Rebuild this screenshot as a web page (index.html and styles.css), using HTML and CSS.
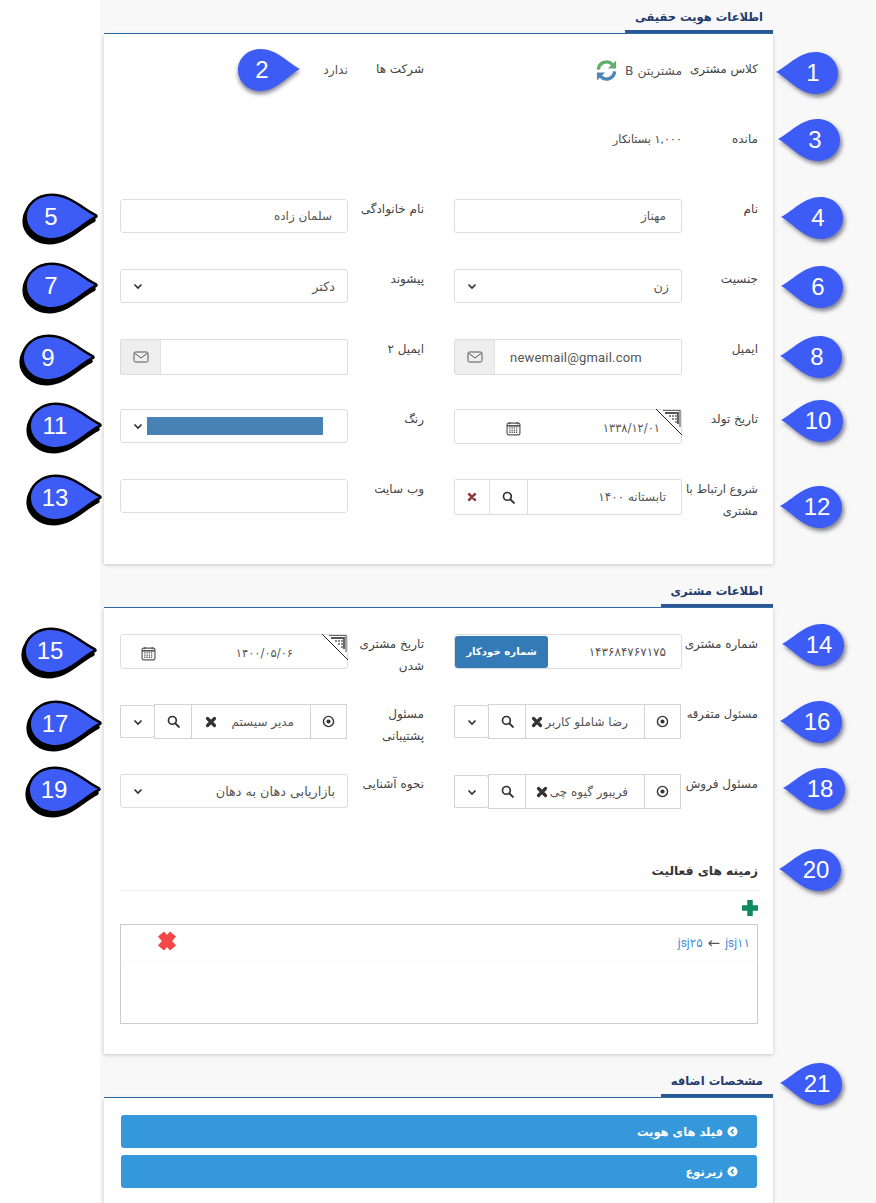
FILE: index.html
```html
<!DOCTYPE html>
<html lang="fa" dir="rtl">
<head>
  <meta charset="UTF-8" />
  <meta name="viewport" content="width=device-width, initial-scale=1.0" />
  <title>اطلاعات هویت حقیقی</title>
  <link rel="stylesheet" href="styles.css">
</head>
<body>

  <svg class="sprite" xmlns="http://www.w3.org/2000/svg">
    <symbol id="i-chevron" viewBox="0 0 12 12"><path d="M2.5 4.5 6 8l3.500-3.500" fill="none" stroke="currentColor" stroke-width="1.700"/></symbol>
    <symbol id="i-search" viewBox="0 0 14 14"><circle cx="5.800" cy="5.800" r="4.200" fill="none" stroke="currentColor" stroke-width="1.800"/><path d="M9 9l3.800 3.800" stroke="currentColor" stroke-width="2.200" stroke-linecap="round"/></symbol>
    <symbol id="i-times" viewBox="0 0 12 12"><path d="M2.500 2.500l7 7M9.500 2.500l-7 7" stroke="currentColor" stroke-width="3.200" stroke-linecap="round"/></symbol>
    <symbol id="i-times-big" viewBox="0 0 24 24"><path d="M6 5l12 14M18 5 6 19" stroke="currentColor" stroke-width="8"/></symbol>
    <symbol id="i-target" viewBox="0 0 12 12"><circle cx="6" cy="6" r="4.700" fill="none" stroke="currentColor" stroke-width="1.300"/><circle cx="6" cy="6" r="1.900" fill="currentColor"/></symbol>
    <symbol id="i-mail" viewBox="0 0 16 14"><rect x="1" y="2" width="14" height="10" rx="1.500" fill="none" stroke="currentColor" stroke-width="1"/><path d="M1.500 3 8 8l6.500-5" fill="none" stroke="currentColor" stroke-width="1"/></symbol>
    <symbol id="i-cal" viewBox="0 0 14 14"><rect x="1" y="2" width="12" height="11" rx="1.500" fill="none" stroke="currentColor" stroke-width="1.100"/><path d="M1 4.500h12" stroke="currentColor" stroke-width="1.500"/><path d="M3.500 1v2M10.500 1v2" stroke="currentColor" stroke-width="1.200"/><path d="M3 6.500h8M3 8.500h8M3 10.500h8" stroke="currentColor" stroke-width="1.200" stroke-dasharray="1.200 .9"/></symbol>
    <symbol id="i-corner" viewBox="0 0 26 26"><path d="M0 0 26 26" stroke="#222" stroke-width="1"/><path d="M7 1.500H24V18" fill="none" stroke="#666" stroke-width="1.200"/><path d="M9 4H22V15" fill="none" stroke="#555" stroke-width="1.800"/><path d="M13 7h8M16 10h5M19 13h2" fill="none" stroke="#666" stroke-width="1.500" stroke-dasharray="2 1"/></symbol>
    <symbol id="i-pin" viewBox="0 0 64 44" preserveAspectRatio="none"><path d="M0 21C13 14 24 0 41 0 54 0 64 10 64 22 64 34 54 44 41 44 24 44 13 28 0 21Z"/></symbol>
  </svg>

  <main class="page">

    <header class="section-head"><h2 class="section-title">اطلاعات هویت حقیقی</h2></header>
    <section class="panel">
      <div class="form-grid">
        <div class="field">
          <span class="label">کلاس مشتری</span>
          <span class="value">مشتریتن B
            <svg class="refresh" viewBox="0 0 24 24">
              <path d="M3.500 11A8.500 8.500 0 0 1 18.200 5.800" fill="none" stroke="#5fae6c" stroke-width="3.600"/>
              <path d="M22 1.500v8.500h-8.500z" fill="#5fae6c"/>
              <path d="M20.500 13A8.500 8.500 0 0 1 5.800 18.200" fill="none" stroke="#4f86b5" stroke-width="3.600"/>
              <path d="M2 22.500V14h8.500z" fill="#4f86b5"/>
            </svg>
          </span>
        </div>
        <div class="field">
          <span class="label">شرکت ها</span>
          <span class="value">ندارد</span>
        </div>

        <div class="field">
          <span class="label">مانده</span>
          <span class="value value-strong">۱,۰۰۰ بستانکار</span>
        </div>
        <div class="field"></div>

        <div class="field">
          <span class="label">نام</span>
          <div class="input"><span class="text">مهناز</span></div>
        </div>
        <div class="field">
          <span class="label">نام خانوادگی</span>
          <div class="input"><span class="text">سلمان زاده</span></div>
        </div>

        <div class="field">
          <span class="label">جنسیت</span>
          <div class="input input-select"><span class="text">زن</span><svg class="chev"><use href="#i-chevron"/></svg></div>
        </div>
        <div class="field">
          <span class="label">پیشوند</span>
          <div class="input input-select"><span class="text">دکتر</span><svg class="chev"><use href="#i-chevron"/></svg></div>
        </div>

        <div class="field">
          <span class="label">ایمیل</span>
          <div class="input input-tall">
            <span class="text text-ltr">newemail@gmail.com</span>
            <span class="addon"><svg class="mail"><use href="#i-mail"/></svg></span>
          </div>
        </div>
        <div class="field">
          <span class="label">ایمیل ۲</span>
          <div class="input input-tall">
            <span class="text"></span>
            <span class="addon"><svg class="mail"><use href="#i-mail"/></svg></span>
          </div>
        </div>

        <div class="field">
          <span class="label">تاریخ تولد</span>
          <div class="input input-date date-birth">
            <span class="text">۱۳۳۸/۱۲/۰۱</span>
            <svg class="cal"><use href="#i-cal"/></svg>
            <svg class="corner"><use href="#i-corner"/></svg>
          </div>
        </div>
        <div class="field">
          <span class="label">رنگ</span>
          <div class="input input-select color-select"><span class="color-bar"></span><svg class="chev"><use href="#i-chevron"/></svg></div>
        </div>

        <div class="field">
          <span class="label label-tight">شروع ارتباط با<br>مشتری</span>
          <div class="input input-tall">
            <span class="text">تابستانه ۱۴۰۰</span>
            <span class="cell cell-search"><svg class="search"><use href="#i-search"/></svg></span>
            <span class="cell cell-clear"><svg class="clear"><use href="#i-times"/></svg></span>
          </div>
        </div>
        <div class="field">
          <span class="label">وب سایت</span>
          <div class="input"><span class="text"></span></div>
        </div>
      </div>
    </section>

    <header class="section-head"><h2 class="section-title">اطلاعات مشتری</h2></header>
    <section class="panel panel-customer">
      <div class="form-grid">
        <div class="field">
          <span class="label">شماره مشتری</span>
          <div class="input input-date">
            <span class="text">۱۴۳۶۸۴۷۶۷۱۷۵</span>
            <button class="auto-btn">شماره خودکار</button>
          </div>
        </div>
        <div class="field">
          <span class="label">تاریخ مشتری<br>شدن</span>
          <div class="input input-date date-customer">
            <span class="text">۱۴۰۰/۰۵/۰۶</span>
            <svg class="cal"><use href="#i-cal"/></svg>
            <svg class="corner"><use href="#i-corner"/></svg>
          </div>
        </div>

        <div class="field">
          <span class="label label-tight">مسئول متفرقه</span>
          <div class="combo">
            <span class="cell cell-target"><svg class="target"><use href="#i-target"/></svg></span>
            <span class="cell cell-name"><span class="text">رضا شاملو کاربر</span><svg class="remove"><use href="#i-times"/></svg></span>
            <span class="cell cell-search"><svg class="search"><use href="#i-search"/></svg></span>
            <span class="cell cell-drop"><svg class="chev"><use href="#i-chevron"/></svg></span>
          </div>
        </div>
        <div class="field">
          <span class="label">مسئول<br>پشتیبانی</span>
          <div class="combo">
            <span class="cell cell-target"><svg class="target"><use href="#i-target"/></svg></span>
            <span class="cell cell-name"><span class="text">مدیر سیستم</span><svg class="remove remove-far"><use href="#i-times"/></svg></span>
            <span class="cell cell-search"><svg class="search"><use href="#i-search"/></svg></span>
            <span class="cell cell-drop"><svg class="chev"><use href="#i-chevron"/></svg></span>
          </div>
        </div>

        <div class="field">
          <span class="label">مسئول فروش</span>
          <div class="combo">
            <span class="cell cell-target"><svg class="target"><use href="#i-target"/></svg></span>
            <span class="cell cell-name"><span class="text">فریبور گیوه چی</span><svg class="remove"><use href="#i-times"/></svg></span>
            <span class="cell cell-search"><svg class="search"><use href="#i-search"/></svg></span>
            <span class="cell cell-drop"><svg class="chev"><use href="#i-chevron"/></svg></span>
          </div>
        </div>
        <div class="field">
          <span class="label">نحوه آشنایی</span>
          <div class="input input-select"><span class="text">بازاریابی دهان به دهان</span><svg class="chev"><use href="#i-chevron"/></svg></div>
        </div>
      </div>

      <h3 class="activity-title">زمینه های فعالیت</h3>
      <div class="add-row">
        <svg class="add" viewBox="0 0 16 16"><path d="M8 0v16M0 8h16" stroke="#0f8a5f" stroke-width="5.500"/></svg>
      </div>
      <div class="activity-box">
        <div class="activity-row">
          <a class="link">jsj۱۱</a>
          <span class="arrow">←</span>
          <a class="link">jsj۲۵</a>
          <svg class="activity-del"><use href="#i-times-big"/></svg>
        </div>
      </div>
    </section>

    <header class="section-head"><h2 class="section-title">مشخصات اضافه</h2></header>
    <section class="panel panel-extra">
      <div class="collapse-bar"><svg class="collapse-icon" viewBox="0 0 12 12"><circle cx="6" cy="6" r="5.500" fill="#fff"/><path d="M7.300 3.300 4.700 6l2.600 2.700" fill="none" stroke="#3498db" stroke-width="1.800"/></svg>فیلد های هویت</div>
      <div class="collapse-bar"><svg class="collapse-icon" viewBox="0 0 12 12"><circle cx="6" cy="6" r="5.500" fill="#fff"/><path d="M7.300 3.300 4.700 6l2.600 2.700" fill="none" stroke="#3498db" stroke-width="1.800"/></svg>زیرنوع</div>
    </section>

  </main>

  <!-- numbered callouts drawn over the screenshot -->
  <div class="pin pin-r pin-1"><svg><use href="#i-pin"/></svg><span>1</span></div>
  <div class="pin pin-l pin-2"><svg><use href="#i-pin"/></svg><span>2</span></div>
  <div class="pin pin-r pin-3"><svg><use href="#i-pin"/></svg><span>3</span></div>
  <div class="pin pin-r pin-4"><svg><use href="#i-pin"/></svg><span>4</span></div>
  <div class="pin pin-l pin-dark pin-5"><svg><use href="#i-pin"/></svg><span>5</span></div>
  <div class="pin pin-r pin-6"><svg><use href="#i-pin"/></svg><span>6</span></div>
  <div class="pin pin-l pin-dark pin-7"><svg><use href="#i-pin"/></svg><span>7</span></div>
  <div class="pin pin-r pin-8"><svg><use href="#i-pin"/></svg><span>8</span></div>
  <div class="pin pin-l pin-dark pin-9"><svg><use href="#i-pin"/></svg><span>9</span></div>
  <div class="pin pin-r pin-10"><svg><use href="#i-pin"/></svg><span>10</span></div>
  <div class="pin pin-l pin-dark pin-11"><svg><use href="#i-pin"/></svg><span>11</span></div>
  <div class="pin pin-r pin-12"><svg><use href="#i-pin"/></svg><span>12</span></div>
  <div class="pin pin-l pin-dark pin-13"><svg><use href="#i-pin"/></svg><span>13</span></div>
  <div class="pin pin-r pin-14"><svg><use href="#i-pin"/></svg><span>14</span></div>
  <div class="pin pin-l pin-dark pin-15"><svg><use href="#i-pin"/></svg><span>15</span></div>
  <div class="pin pin-r pin-16"><svg><use href="#i-pin"/></svg><span>16</span></div>
  <div class="pin pin-l pin-dark pin-17"><svg><use href="#i-pin"/></svg><span>17</span></div>
  <div class="pin pin-r pin-18"><svg><use href="#i-pin"/></svg><span>18</span></div>
  <div class="pin pin-l pin-dark pin-19"><svg><use href="#i-pin"/></svg><span>19</span></div>
  <div class="pin pin-r pin-20"><svg><use href="#i-pin"/></svg><span>20</span></div>
  <div class="pin pin-r pin-21"><svg><use href="#i-pin"/></svg><span>21</span></div>

</body>
</html>
```

FILE: styles.css
```css
html, body {
  margin: 0;
  height: 1203px;
  overflow: hidden;
  background: #fff;
}

body {
  position: relative;
  font-family: "DejaVu Sans", sans-serif;
  font-size: 12px;
  color: #444;
}

.sprite {
  display: none;
}

.page {
  margin-left: 100px;
  height: 1199px;
  padding: 4px 103px 0 4px;
  background: #f8f8f8;
}

/* section headings */
.section-head {
  position: relative;
  z-index: 1;
  display: flex;
  height: 29px;
  margin-top: 14px;
  border-bottom: 1px solid #2f6ba5;
}

.section-head:first-child {
  margin-top: 0;
}

.section-title {
  margin: 0 0 -1px;
  padding: 0 10px;
  height: 26px;
  line-height: 26px;
  font-size: 11.5px;
  font-weight: bold;
  color: #1f3a6d;
  border-bottom: 3px solid #2b5797;
}

/* panels */
.panel {
  background: #fff;
  padding: 25px 15px 15px 16px;
  box-shadow: 0 1px 4px rgba(0, 0, 0, 0.2);
}

.panel-customer {
  padding-top: 26px;
  padding-bottom: 30px;
}

.panel-extra {
  padding-top: 17px;
}

.form-grid {
  display: grid;
  grid-template-columns: 304px 304px;
  grid-auto-rows: 70px;
  column-gap: 30px;
}

.field {
  display: grid;
  grid-template-columns: 76px 228px;
  align-items: start;
}

.label {
  line-height: 22px;
  margin-top: -1px;
  font-size: 12px;
  color: #444;
  white-space: nowrap;
}

.label-tight {
  font-size: 11.5px;
}

.value {
  display: flex;
  align-items: center;
  gap: 7px;
  line-height: 22px;
  font-size: 12.3px;
  color: #555;
}

.value-strong {
  color: #444;
  font-size: 11.2px;
}

.refresh {
  width: 23px;
  height: 23px;
}

/* inputs */
.input {
  position: relative;
  display: flex;
  align-items: center;
  justify-content: space-between;
  height: 32px;
  border: 1px solid #ddd;
  border-radius: 3px;
  background: #fff;
}

.input .text {
  padding: 0 15px;
  color: #555;
  white-space: nowrap;
}

.input-tall {
  height: 34px;
  justify-content: flex-start;
  border-radius: 2px;
}

.input-tall .text {
  flex: 1;
}

.text-ltr {
  direction: ltr;
  font-family: Roboto, sans-serif;
  font-size: 13px;
  letter-spacing: 0.2px;
  text-align: left;
}

.input-select .text {
  padding: 0 12px;
  font-size: 12.8px;
}

.chev {
  width: 12px;
  height: 12px;
  color: #333;
}

.input-select .chev {
  margin-left: 11px;
}

.addon {
  display: flex;
  align-items: center;
  justify-content: center;
  width: 39px;
  height: 100%;
  background: #eee;
  border-right: 1px solid #e2e2e2;
}

.mail {
  width: 16px;
  height: 14px;
  color: #555;
}

.color-select {
  padding-right: 24px;
}

.color-bar {
  width: 176px;
  height: 18px;
  background: #4682b4;
}

.input-date {
  height: 33px;
}

.date-birth .text {
  padding: 3px 21px 0 0;
  font-size: 11.5px;
}

.date-customer .text {
  padding: 3px 54px 0 0;
  font-size: 11.5px;
}

.cal {
  width: 15px;
  height: 15px;
  color: #555;
  margin-top: 4px;
}

.date-birth .cal {
  margin-left: 51px;
}

.date-customer .cal {
  margin-left: 20px;
}

.corner {
  position: absolute;
  top: -1px;
  right: -1px;
  width: 26px;
  height: 26px;
}

.cell {
  display: flex;
  align-items: center;
  justify-content: center;
  height: 100%;
  color: #333;
}

.cell-search {
  width: 38px;
  box-sizing: border-box;
  border-right: 1px solid #ddd;
}

.cell-clear {
  width: 34px;
  border-right: 1px solid #ddd;
}

.search {
  width: 13px;
  height: 13px;
}

.clear {
  width: 10px;
  height: 10px;
  color: #8e3b3b;
}

.auto-btn {
  width: 93px;
  height: 32px;
  padding: 0;
  border: 0;
  border-radius: 3px;
  background: #337ab7;
  color: #fff;
  font: bold 10.2px "DejaVu Sans", sans-serif;
}

/* combo with pick, search and dropdown cells */
.combo {
  display: flex;
  height: 35px;
}

.combo .cell {
  box-sizing: border-box;
  border: 1px solid #d4d4d4;
  margin-right: -1px;
}

.combo .cell-target {
  width: 37px;
  margin-right: 1px;
}

.combo .cell-name {
  flex: 1;
  justify-content: flex-start;
  padding-right: 16px;
  color: #555;
  white-space: nowrap;
}

.combo .cell-drop {
  width: 35px;
  height: 33px;
  align-self: center;
  border-radius: 0 3px 3px 0;
}

.target {
  width: 13px;
  height: 13px;
  color: #333;
}

.remove {
  flex: none;
  width: 12px;
  height: 12px;
  margin-right: 2px;
  color: #333;
}

.remove-far {
  margin-right: 15px;
}

/* activity list */
.activity-title {
  margin: 15px 0 0;
  height: 31px;
  line-height: 24px;
  font-size: 12.2px;
  font-weight: bold;
  color: #333;
  border-bottom: 1px solid #eee;
}

.add-row {
  display: flex;
  height: 33px;
  align-items: center;
}

.add {
  width: 16px;
  height: 16px;
}

.activity-box {
  height: 98px;
  border: 1px solid #ccc;
}

.activity-row {
  display: flex;
  align-items: center;
  gap: 5px;
  height: 35px;
  padding-right: 7px;
  border-bottom: 1px solid #fafafa;
}

.link {
  font-family: Roboto, "DejaVu Sans", sans-serif;
  font-size: 12px;
  color: #4a90d9;
}

.arrow {
  color: #555;
  font-size: 15px;
}

.activity-del {
  width: 24px;
  height: 24px;
  margin-right: auto;
  margin-left: 34px;
  margin-top: -4px;
  color: #f44848;
}

/* collapsed groups */
.collapse-bar {
  display: flex;
  align-items: center;
  gap: 4px;
  height: 33px;
  margin: 0 1px 7px;
  padding-right: 19px;
  border-radius: 3px;
  background: #3498db;
  color: #fff;
  font-weight: bold;
  font-size: 11.5px;
}

.collapse-icon {
  width: 11px;
  height: 11px;
}

/* callouts */
.pin {
  position: absolute;
  z-index: 2;
  direction: ltr;
  width: 62px;
  height: 42px;
  color: #fff;
  font: 24px/42px "Liberation Sans", sans-serif;
  text-align: center;
}

.pin svg {
  position: absolute;
  left: 0;
  top: 0;
  width: 100%;
  height: 100%;
  fill: #3d5cf5;
  filter: drop-shadow(2px 3px 2px rgba(30, 30, 60, 0.55));
}

.pin span {
  position: absolute;
  top: 0;
  width: 40px;
}

.pin-r span {
  left: 17px;
}

.pin-l svg {
  transform: scaleX(-1);
  filter: drop-shadow(0 3px 2px rgba(30, 30, 60, 0.55));
}

.pin-l span {
  left: 4px;
}

.pin-dark {
  width: 68px;
}

.pin-dark svg {
  stroke: #000;
  stroke-width: 5px;
  stroke-linejoin: round;
  paint-order: stroke;
  overflow: visible;
  /* the svg is mirrored, so a positive x lands on the left */
  filter: drop-shadow(2px 4px 0 #000);
}

symbol {
  overflow: visible;
}

.pin-1 { left: 776px; top: 52px; }
.pin-2 { left: 238px; top: 49px; }
.pin-3 { left: 778px; top: 119px; }
.pin-4 { left: 781px; top: 197px; }
.pin-5 { left: 27px; top: 196px; }
.pin-6 { left: 781px; top: 266px; }
.pin-7 { left: 27px; top: 265px; }
.pin-8 { left: 780px; top: 336px; }
.pin-9 { left: 24px; top: 337px; }
.pin-10 { left: 781px; top: 400px; }
.pin-11 { left: 31px; top: 405px; }
.pin-12 { left: 780px; top: 486px; }
.pin-13 { left: 31px; top: 477px; }
.pin-14 { left: 782px; top: 624px; }
.pin-15 { left: 26px; top: 630px; }
.pin-16 { left: 780px; top: 701px; }
.pin-17 { left: 31px; top: 703px; }
.pin-18 { left: 783px; top: 768px; }
.pin-19 { left: 30px; top: 769px; }
.pin-20 { left: 779px; top: 849px; }
.pin-21 { left: 780px; top: 1063px; }
```
